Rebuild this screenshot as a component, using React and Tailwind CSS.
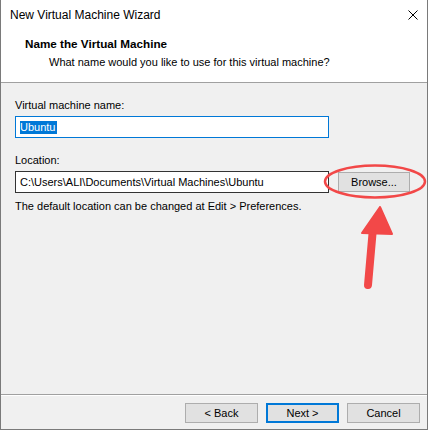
export default function App() {
  const font = { fontFamily: '"Liberation Sans", Arial, sans-serif' };
  return (
    <div
      className="w-[428px] h-[430px] flex flex-col border-l border-r border-b border-[#7a7a7a] bg-[#f0f0f0] text-[11px] text-black overflow-hidden relative"
      style={font}
    >
      {/* header */}
      <div className="h-[82px] bg-white flex flex-col">
        <div className="h-[30px] flex items-center justify-between pl-[9px] pr-[9px]">
          <span className="leading-[16px] text-[12px]">New Virtual Machine Wizard</span>
          <svg width="10" height="10" viewBox="0 0 10 10">
            <path d="M0.5 0.5 L9.5 9.5 M9.5 0.5 L0.5 9.5" stroke="#000" strokeWidth="1" fill="none" />
          </svg>
        </div>
        <div className="mt-[6px] pl-[24px] font-bold leading-[16px] text-[11.7px]">Name the Virtual Machine</div>
        <div className="mt-[2px] pl-[48px] leading-[16px]">What name would you like to use for this virtual machine?</div>
      </div>
      <div className="h-px bg-[#a0a0a0]" />

      {/* body */}
      <div className="flex-1 flex flex-col pl-[14px] pt-[14px]">
        <div className="leading-[16px]">Virtual machine name:</div>
        <div className="mt-[3px] w-[314px] h-[22px] border border-[#0078d7] bg-white flex items-center pl-[4px]">
          <span className="bg-[#0078d7] text-white leading-[13px] h-[13px] flex items-center pr-[2px]">Ubuntu</span>
        </div>
        <div className="mt-[14px] leading-[16px]">Location:</div>
        <div className="mt-[3px] flex items-center">
          <div className="w-[314px] h-[22px] border border-[#333] bg-white flex items-center pl-[4px]">
            C:\Users\ALI\Documents\Virtual Machines\Ubuntu
          </div>
          <button className="ml-[9px] w-[72px] h-[20px] border border-[#adadad] bg-[#e1e1e1] flex items-center justify-center leading-[16px]">
            Browse...
          </button>
        </div>
        <div className="mt-[5px] leading-[16px]">The default location can be changed at Edit &gt; Preferences.</div>
      </div>

      {/* footer */}
      <div className="h-px bg-[#a0a0a0]" />
      <div className="h-px bg-white" />
      <div className="h-[33px] flex justify-end items-start gap-[8px] pr-[7px] pt-[7px]">
        <button className="w-[73px] h-[20px] border border-[#adadad] bg-[#e1e1e1] flex items-center justify-center leading-[16px]">
          &lt; Back
        </button>
        <button className="w-[73px] h-[20px] border-2 border-[#0078d7] bg-[#e1e1e1] flex items-center justify-center leading-[16px]">
          Next &gt;
        </button>
        <button className="w-[73px] h-[20px] border border-[#adadad] bg-[#e1e1e1] flex items-center justify-center leading-[16px]">
          Cancel
        </button>
      </div>

      {/* annotation overlay */}
      <svg className="absolute left-[-1px] top-0 pointer-events-none" width="428" height="430" viewBox="0 0 428 430">
        <ellipse cx="375" cy="181.5" rx="50" ry="16" fill="none" stroke="#f24848" strokeWidth="2.5" />
        <line x1="373" y1="228" x2="368" y2="285" stroke="#f24848" strokeWidth="8" strokeLinecap="round" />
        <polygon points="380,207 362,233 392,234" fill="#f24848" stroke="#f24848" strokeWidth="2" strokeLinejoin="round" />
      </svg>
    </div>
  );
}
